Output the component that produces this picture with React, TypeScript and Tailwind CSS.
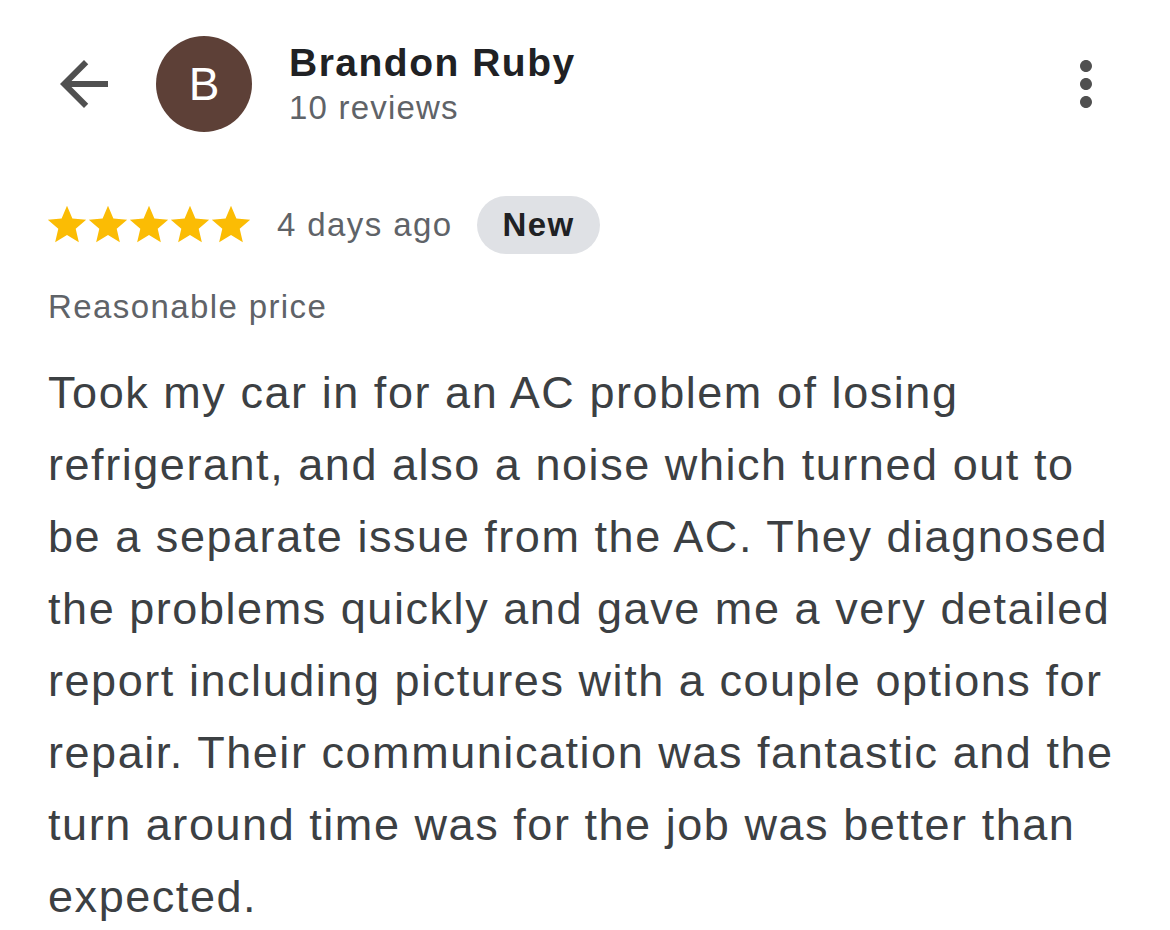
import React from 'react';

const STAR = 'M12 17.27L18.18 21l-1.64-7.03L22 9.24l-7.19-.61L12 2 9.19 8.63 2 9.24l5.46 4.73L5.82 21z';

function Star() {
  return (
    <svg viewBox="0 0 24 24" className="w-[46px] h-[46px] shrink-0 -mr-[5px]" fill="#fbbc04">
      <path d={STAR} />
    </svg>
  );
}

export default function App() {
  const body =
    'Took my car in for an AC problem of losing refrigerant, and also a noise which turned out to be a separate issue from the AC. They diagnosed the problems quickly and gave me a very detailed report including pictures with a couple options for repair. Their communication was fantastic and the turn around time was for the job was better than expected.';

  return (
    <div
      className="w-[1170px] min-h-[930px] bg-white"
      style={{ fontFamily: '"Liberation Sans", Arial, sans-serif' }}
    >
      {/* header */}
      <div className="flex items-center pl-12 pr-12 pt-9">
        <svg viewBox="0 0 24 24" className="w-[72px] h-[72px] shrink-0" fill="#505050">
          <path d="M20 11H7.83l5.59-5.59L12 4l-8 8 8 8 1.41-1.41L7.83 13H20v-2z" />
        </svg>
        <div className="ml-9 w-24 h-24 rounded-full bg-[#5d4037] flex items-center justify-center shrink-0">
          <span className="text-white text-[46px] leading-none">B</span>
        </div>
        <div className="ml-[37px] flex-1">
          <div className="text-[39px] leading-[44px] font-bold text-[#202124] tracking-[1.5px]">
            Brandon Ruby
          </div>
          <div className="text-[33px] leading-[40px] text-[#5f6368] tracking-[1.2px] mt-[3px]">
            10 reviews
          </div>
        </div>
        <svg viewBox="0 0 24 24" className="w-[72px] h-[72px] shrink-0" fill="#505050">
          <path d="M12 8c1.1 0 2-.9 2-2s-.9-2-2-2-2 .9-2 2 .9 2 2 2zm0 2c-1.1 0-2 .9-2 2s.9 2 2 2 2-.9 2-2-.9-2-2-2zm0 6c-1.1 0-2 .9-2 2s.9 2 2 2 2-.9 2-2-.9-2-2-2z" />
        </svg>
      </div>

      {/* rating row */}
      <div className="px-12 mt-16">
        <div className="flex items-center h-[58px]">
          <div className="flex -ml-1">
            <Star />
            <Star />
            <Star />
            <Star />
            <Star />
          </div>
          <span className="ml-[28px] text-[33px] text-[#5f6368] tracking-[1.4px]">4 days ago</span>
          <span className="ml-[25px] h-[58px] px-[25px] rounded-full bg-[#dfe1e5] flex items-center text-[33px] font-bold text-[#202124] tracking-[1.4px]">
            New
          </span>
        </div>

        <div className="mt-[31px] text-[33px] leading-[44px] text-[#5f6368] tracking-[1.4px]">
          Reasonable price
        </div>

        <p className="mt-[28px] text-[45px] leading-[72px] text-[#3c4043] tracking-[1.55px]">{body}</p>
      </div>
    </div>
  );
}
